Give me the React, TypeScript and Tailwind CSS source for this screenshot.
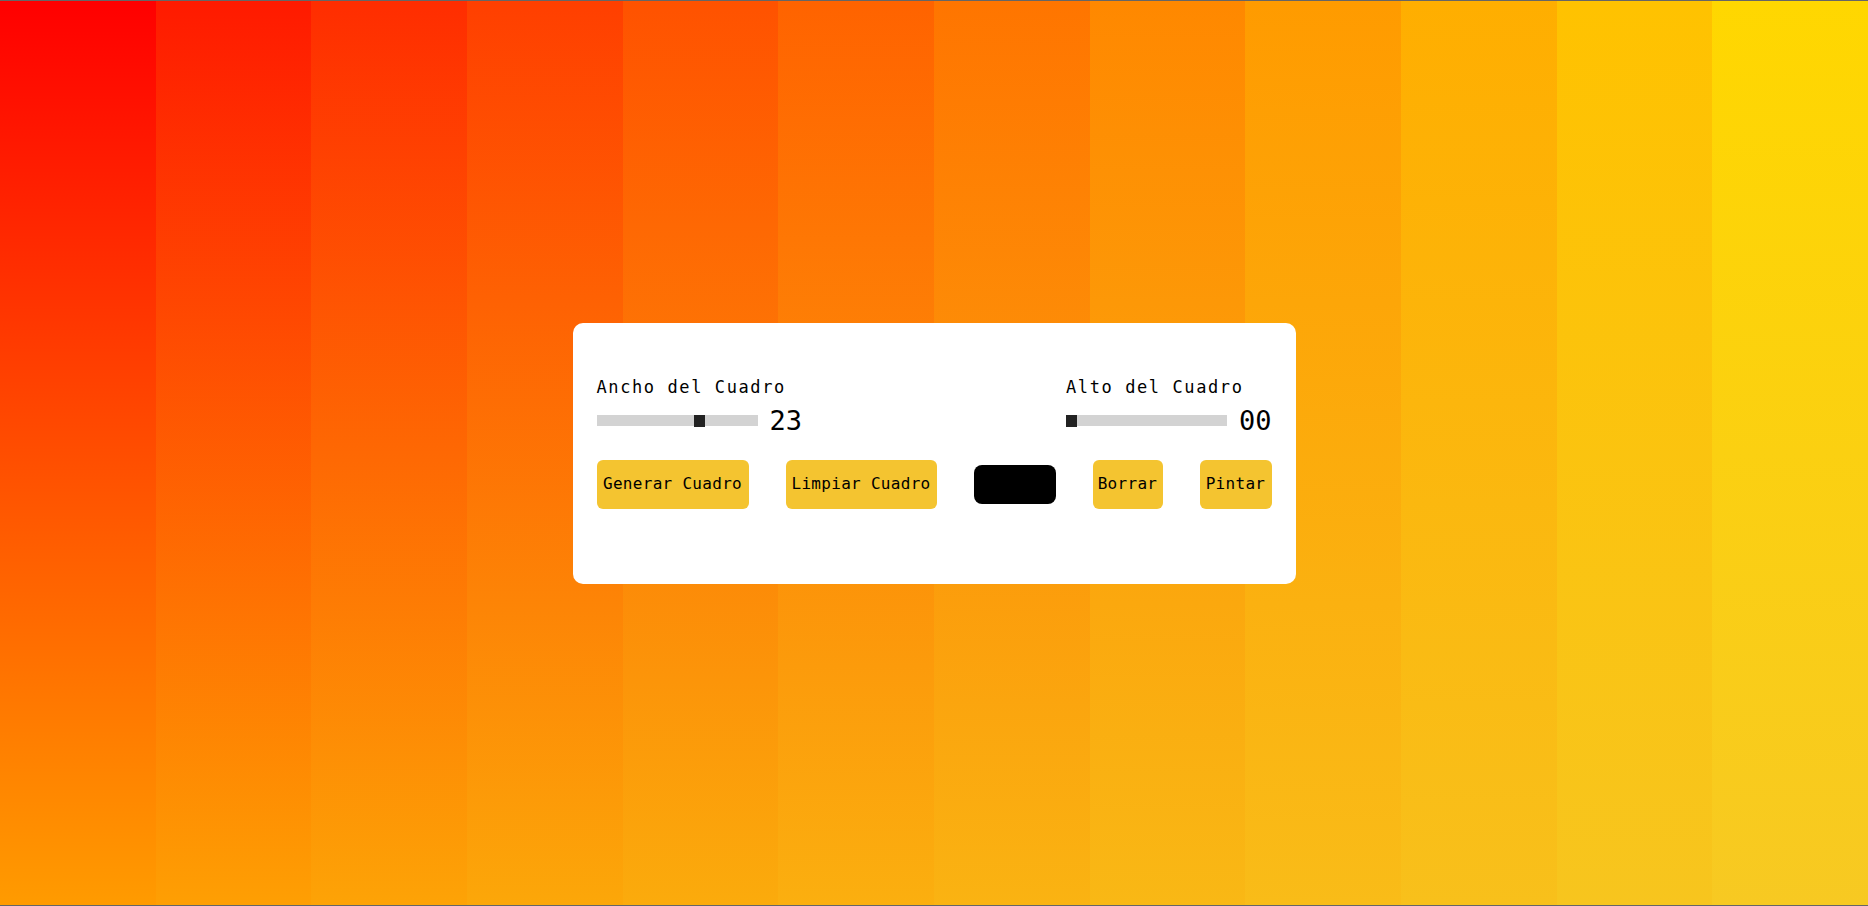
const columns = [
  "bg-linear-to-b/srgb from-[#ff0000] to-[#ff9b00]",
  "bg-linear-to-b/srgb from-[#ff1a00] to-[#fe9f03]",
  "bg-linear-to-b/srgb from-[#ff2d00] to-[#fda306]",
  "bg-linear-to-b/srgb from-[#ff3f00] to-[#fca709]",
  "bg-linear-to-b/srgb from-[#ff5200] to-[#fbab0c]",
  "bg-linear-to-b/srgb from-[#ff6300] to-[#fbaf0f]",
  "bg-linear-to-b/srgb from-[#ff7500] to-[#fab312]",
  "bg-linear-to-b/srgb from-[#ff8800] to-[#f9b815]",
  "bg-linear-to-b/srgb from-[#ff9b00] to-[#f9bc18]",
  "bg-linear-to-b/srgb from-[#ffae00] to-[#f8c01b]",
  "bg-linear-to-b/srgb from-[#ffc200] to-[#f7c51e]",
  "bg-linear-to-b/srgb from-[#ffd700] to-[#f7c922]",
];

const mono = "font-['DejaVu_Sans_Mono','Liberation_Mono',monospace]";

function Slider({ label, value, offset }: { label: string; value: string; offset: number }) {
  return (
    <div className="flex flex-col">
      <span className="text-[17px] leading-[20px] tracking-[1.6px] text-black">{label}</span>
      <div className="mt-[10px] flex h-[28px] items-center gap-[12px]">
        <div className="flex h-[11px] w-[161px] items-center bg-[#d3d3d3]">
          <div className="h-[12px] w-[11px] bg-[#222222]" style={{ marginLeft: offset }} />
        </div>
        <span className="text-[27px] leading-[28px] text-black">{value}</span>
      </div>
    </div>
  );
}

function Button({ children, width }: { children: string; width: string }) {
  return (
    <button className={`${width} h-[49px] rounded-[6px] bg-[#f4c430] text-[16px] tracking-[0.3px] text-black`}>
      {children}
    </button>
  );
}

export default function App() {
  return (
    <div className={`grid h-screen w-full overflow-hidden border-y border-black/60 ${mono}`}>
      <div className="col-start-1 row-start-1 grid grid-cols-12">
        {columns.map((c, i) => (
          <div key={i} className={c} />
        ))}
      </div>

      <div className="col-start-1 row-start-1 flex items-center justify-center">
        <div className="h-[261px] w-[723px] rounded-[10px] bg-white px-[24px] pt-[54px]">
          <div className="flex justify-between">
            <Slider label="Ancho del Cuadro" value="23" offset={97} />
            <Slider label="Alto del Cuadro" value="00" offset={0} />
          </div>

          <div className="mt-[25px] flex items-center justify-between">
            <Button width="w-[152px]">Generar Cuadro</Button>
            <Button width="w-[151px]">Limpiar Cuadro</Button>
            <div className="h-[39px] w-[82px] rounded-[8px] bg-black" />
            <Button width="w-[70px]">Borrar</Button>
            <Button width="w-[72px]">Pintar</Button>
          </div>
        </div>
      </div>
    </div>
  );
}
